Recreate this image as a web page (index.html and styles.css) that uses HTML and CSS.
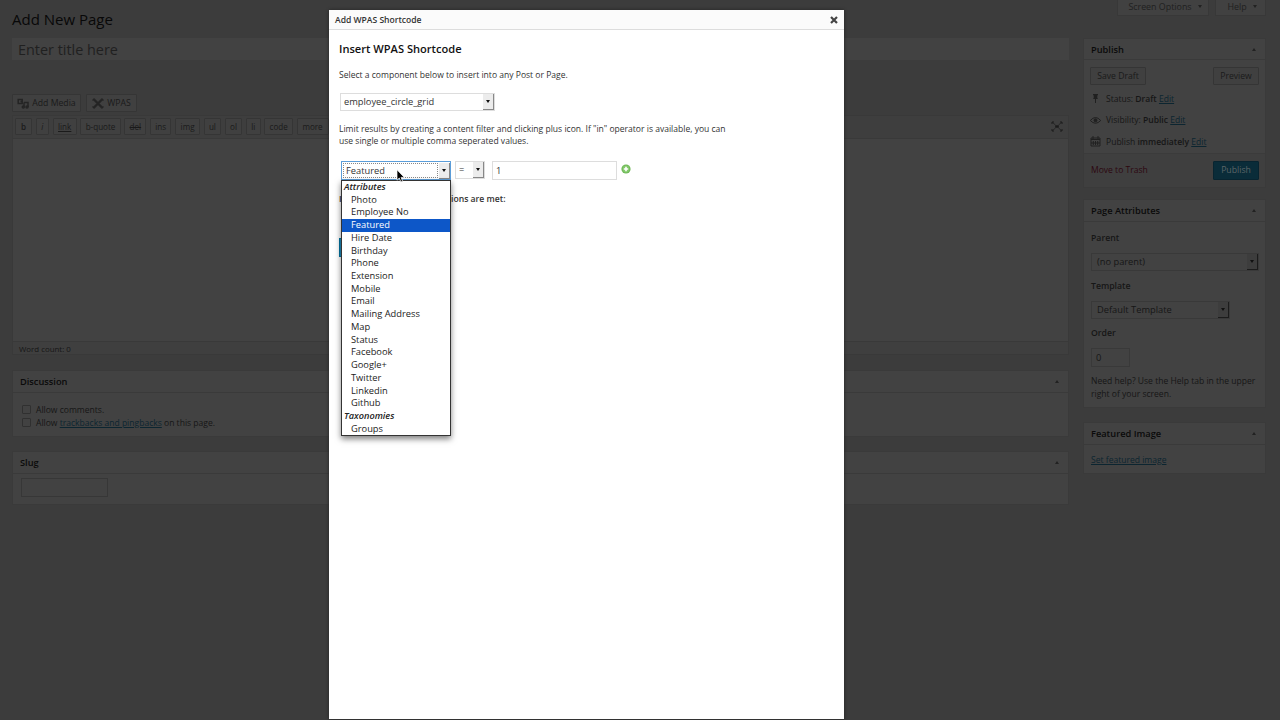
FILE: index.html
```html
<!DOCTYPE html>
<html lang="en">
<head>
  <meta charset="UTF-8" />
  <title>Add New Page</title>
  <link rel="stylesheet" href="styles.css">
</head>
<body>
  <div class="page">
    <header class="top">
      <h1>Add New Page</h1>
      <div class="tabs">
        <a class="tab tab-options">Screen Options <i class="down"></i></a>
        <a class="tab tab-help">Help <i class="down"></i></a>
      </div>
    </header>

    <div class="columns">
      <main class="main">
        <div class="title-input">Enter title here</div>

        <div class="media-buttons">
          <button class="btn btn-media">
            <svg width="12" height="11" viewBox="0 0 12 11" fill="none" stroke="#242424" stroke-width="1.5">
              <path d="M1.2 1.5h4v4h-4zM3.5 3.5h2" />
              <path d="M7 4.5h4v4.5M7 4.5v4" />
              <circle cx="6.3" cy="9" r="1" /><circle cx="10" cy="9" r="1" />
            </svg>
            Add Media
          </button>
          <button class="btn btn-wpas">
            <svg width="12" height="11" viewBox="0 0 12 11" fill="none" stroke="#242424">
              <path d="M2 1.5l8 8M10 1.5l-8 8" stroke-width="2.4" />
              <path d="M.5 2.5l2-2M9.5.5l2 2M.5 8.5l2 2M9.5 10.5l2-2" stroke-width="1.2" />
            </svg>
            WPAS
          </button>
        </div>

        <div class="editor">
          <div class="toolbar">
            <button class="btn q-b"><b>b</b></button>
            <button class="btn q-i"><em>i</em></button>
            <button class="btn q-link"><u>link</u></button>
            <button class="btn q-quote">b-quote</button>
            <button class="btn q-del"><del>del</del></button>
            <button class="btn q-ins">ins</button>
            <button class="btn q-img">img</button>
            <button class="btn q-ul">ul</button>
            <button class="btn q-ol">ol</button>
            <button class="btn q-li">li</button>
            <button class="btn q-code">code</button>
            <button class="btn q-more">more</button>
            <svg class="fullscreen" width="12" height="11" viewBox="0 0 12 11" stroke="#1b1b1b" fill="none">
              <path d="M1 3V1h2M9 1h2v2M1 8v2h2M9 10h2V8" />
              <path d="M1.5 1.5l3 2.5M10.5 1.5l-3 2.5M1.5 9.5l3-2.5M10.5 9.5l-3-2.5" stroke-width=".7" />
              <path d="M4.2 5.5h3.6" stroke-width="2.4" />
            </svg>
          </div>
          <div class="textarea"></div>
          <div class="word-count">Word count: 0</div>
        </div>

        <section class="box discussion">
          <h3>Discussion <i class="up"></i></h3>
          <label><span class="check"></span>Allow comments.</label>
          <label><span class="check"></span>Allow&nbsp;<a>trackbacks and pingbacks</a>&nbsp;on this page.</label>
        </section>

        <section class="box slug">
          <h3>Slug <i class="up"></i></h3>
          <div class="slug-input"></div>
        </section>
      </main>

      <aside class="side">
        <section class="box publish">
          <h3>Publish <i class="up"></i></h3>
          <div class="save-row">
            <button class="btn btn-save">Save Draft</button>
            <button class="btn btn-preview">Preview</button>
          </div>
          <div class="info">
            <svg width="11" height="11" viewBox="0 0 11 11" fill="#202020"><path d="M3 1h5v1l-.7.5V5L8 6H6v4H5V6H3l.7-1V2.5L3 2z" /></svg>
            <p>Status: <b>Draft</b> <a>Edit</a></p>
          </div>
          <div class="info">
            <svg width="11" height="11" viewBox="0 0 11 11" fill="none" stroke="#202020"><path d="M.3 5.5Q5.5-.5 10.7 5.5Q5.5 11 .3 5.5z" /><circle cx="5.5" cy="5.3" r="1.5" fill="#202020" /></svg>
            <p>Visibility: <b>Public</b> <a>Edit</a></p>
          </div>
          <div class="info">
            <svg width="11" height="11" viewBox="0 0 11 11" fill="none" stroke="#202020"><path d="M1 2h9v8H1zM1 3.5h9M3 0v3M8 0v3M3.3 5v4M5.5 5v4M7.7 5v4M1 7h9" /></svg>
            <p>Publish <b>immediately</b> <a>Edit</a></p>
          </div>
          <div class="publish-footer">
            <span class="trash">Move to Trash</span>
            <button class="btn-publish">Publish</button>
          </div>
        </section>

        <section class="box attributes">
          <h3>Page Attributes <i class="up"></i></h3>
          <h4>Parent</h4>
          <div class="dark-select parent">(no parent)<span class="arrow"></span></div>
          <h4>Template</h4>
          <div class="dark-select template">Default Template<span class="arrow"></span></div>
          <h4>Order</h4>
          <div class="order">0</div>
          <p class="help">Need help? Use the Help tab in the upper<br>right of your screen.</p>
        </section>

        <section class="box featured">
          <h3>Featured Image <i class="up"></i></h3>
          <p><a>Set featured image</a></p>
        </section>
      </aside>
    </div>
  </div>

  <!-- Shortcode dialog -->
  <div class="modal">
    <div class="modal-title">
      <span>Add WPAS Shortcode</span>
      <svg width="8" height="8" viewBox="0 0 8 8" stroke="#444" stroke-width="2.2"><path d="M1 1l6 6M7 1L1 7" /></svg>
    </div>
    <div class="modal-body">
      <h2>Insert WPAS Shortcode</h2>
      <p class="intro">Select a component below to insert into any Post or Page.</p>
      <div class="select component">employee_circle_grid<span class="arrow"></span></div>
      <p class="limit">Limit results by creating a content filter and clicking plus icon. If "in" operator is available, you can<br>use single or multiple comma seperated values.</p>
      <div class="filter">
        <div class="select field"><span class="focus">Featured</span><span class="arrow"></span>
          <ul class="options">
            <li class="group">Attributes</li>
            <li>Photo</li>
            <li>Employee No</li>
            <li class="selected">Featured</li>
            <li>Hire Date</li>
            <li>Birthday</li>
            <li>Phone</li>
            <li>Extension</li>
            <li>Mobile</li>
            <li>Email</li>
            <li>Mailing Address</li>
            <li>Map</li>
            <li>Status</li>
            <li>Facebook</li>
            <li>Google+</li>
            <li>Twitter</li>
            <li>Linkedin</li>
            <li>Github</li>
            <li class="group">Taxonomies</li>
            <li>Groups</li>
          </ul>
          <svg class="cursor" width="9" height="14" viewBox="0 0 9 14" fill="#000" stroke="#fff" stroke-width=".7"><path d="M1 .8v10.4l2.3-2.2 1.6 3.9 1.7-.7L5 8.4h3.3z" /></svg>
        </div>
        <div class="select operator">=<span class="arrow"></span></div>
        <div class="value">1</div>
        <svg class="plus" width="10" height="10" viewBox="0 0 10 10"><circle cx="5" cy="5" r="4.6" fill="#6fb857" /><circle cx="5" cy="5" r="3.4" fill="#83c96b" /><path d="M5 2.8v4.4M2.8 5h4.4" stroke="#fff" stroke-width="1.6" /></svg>
      </div>
      <p class="conditions"><span>I</span><span>ions are met:</span></p>
      <button class="insert"></button>
    </div>
  </div>
</body>
</html>
```
FILE: styles.css
```css
* {
  box-sizing: border-box;
}

body {
  height: 720px;
  margin: 0;
  overflow: hidden;
  position: relative;
  background-color: #3c3c3c;
  color: #161616;
  font-family: "Open Sans", sans-serif;
  font-size: 8.55px;
}

h1, h2, h3, h4, p, ul {
  margin: 0;
  padding: 0;
}

button {
  font-family: inherit;
  font-size: inherit;
  color: inherit;
  padding: 0;
}

svg {
  flex: none;
}

b {
  font-weight: 600;
}

a {
  color: #0c2530;
  text-decoration: underline;
}

.page {
  padding: 0 14px 0 12px;
}

.top {
  display: flex;
  justify-content: space-between;
  height: 38px;
}

h1 {
  padding-top: 8px;
  font-size: 15px;
  line-height: 22px;
  font-weight: 400;
  color: #080808;
}

.tabs {
  display: flex;
  gap: 6px;
}

.tab {
  display: flex;
  align-items: center;
  justify-content: center;
  gap: 6px;
  height: 16px;
  padding-bottom: 2px;
  background-color: #414141;
  border: 1px solid #383838;
  border-top: none;
  color: #202020;
  font-size: 8.9px;
  text-decoration: none;
}

.tab-options {
  width: 92px;
  padding-left: 4px;
}

.tab-help {
  width: 51px;
  padding-left: 3px;
}

.down, .up {
  border-left: 2px solid transparent;
  border-right: 2px solid transparent;
}

.down {
  border-top: 3px solid #222;
}

.up {
  border-bottom: 3px solid #222;
}

.columns {
  display: flex;
  gap: 14px;
}

.main {
  width: 1057px;
}

.side {
  width: 183px;
}

.title-input {
  height: 22px;
  padding-left: 6px;
  background-color: #424242;
  color: #202020;
  font-size: 14.4px;
  line-height: 23px;
}

.btn {
  background-color: #404040;
  border: 1px solid #353535;
  border-radius: 1px;
  color: #1a1a1a;
}

.media-buttons {
  display: flex;
  gap: 5px;
  padding-top: 34px;
}

.media-buttons .btn {
  display: flex;
  align-items: center;
  justify-content: center;
  gap: 3px;
  height: 18px;
  font-size: 8.7px;
}

.btn-media {
  width: 69px;
}

.btn-wpas {
  width: 51px;
}

.editor {
  height: 240px;
  margin-top: 3px;
  border: 1px solid #393939;
}

.toolbar {
  display: flex;
  align-items: flex-start;
  gap: 3.6px;
  height: 23px;
  padding: 2px 5px 0 2px;
  background-color: #3e3e3e;
  border-bottom: 1px solid #393939;
}

.toolbar .btn {
  height: 17px;
  font-size: 8.1px;
}

.q-b { width: 17px; }
.q-i { width: 13.5px; }
.q-link { width: 24px; }
.q-quote { width: 40.5px; }
.q-del { width: 22px; }
.q-ins { width: 21.5px; }
.q-img { width: 25px; }
.q-ul { width: 17.5px; }
.q-ol { width: 17.5px; }
.q-li { width: 15px; }
.q-code { width: 28.5px; }
.q-more { width: 32px; }

.fullscreen {
  margin: 3px 0 0 auto;
}

.textarea {
  height: 202px;
  background-color: #424242;
}

.word-count {
  height: 13px;
  padding-left: 6px;
  background-color: #3f3f3f;
  border-top: 1px solid #393939;
  font-size: 7.9px;
  line-height: 14px;
}

.box {
  background-color: #424242;
  border: 1px solid #3a3a3a;
}

.box h3 {
  display: flex;
  align-items: center;
  justify-content: space-between;
  height: 22px;
  padding: 0 9px 0 7px;
  border-bottom: 1px solid #3a3a3a;
  font-size: 9.25px;
  font-weight: 600;
  color: #0a0a0a;
}

.discussion {
  height: 67px;
  margin-top: 15px;
}

.discussion label {
  display: flex;
  align-items: center;
  height: 13px;
  padding-left: 9px;
}

.discussion h3 {
  margin-bottom: 10px;
}

.check {
  width: 9px;
  height: 9px;
  margin-right: 5px;
  border: 1px solid #303030;
  border-radius: 1px;
}

.slug {
  height: 54px;
  margin-top: 14px;
}

.slug-input {
  width: 87px;
  height: 19px;
  margin: 4px 0 0 8px;
  border: 1px solid #373737;
}

.publish {
  height: 150px;
}

.publish h3 {
  height: 21px;
}

.save-row {
  display: flex;
  justify-content: space-between;
  padding: 7px 6px 3px 6px;
}

.save-row .btn {
  height: 18px;
  font-size: 8.65px;
}

.btn-save {
  width: 56px;
}

.btn-preview {
  width: 46px;
}

.info {
  display: flex;
  align-items: center;
  gap: 5px;
  height: 21.5px;
  padding-left: 6px;
}

.publish-footer {
  display: flex;
  align-items: center;
  justify-content: space-between;
  height: 34px;
  padding: 0 6px 0 7px;
  background-color: #3f3f3f;
  border-top: 1px solid #3b3b3b;
}

.trash {
  color: #2d0710;
}

.btn-publish {
  width: 46px;
  height: 19px;
  background-color: #0a2c39;
  border: 1px solid #082430;
  border-radius: 1px;
  color: #5c6568;
  font-size: 8.7px;
}

.attributes {
  height: 209px;
  margin-top: 11px;
}

h4 {
  padding-left: 7px;
  font-size: 8.7px;
  line-height: 12px;
  font-weight: 600;
}

.attributes h3 {
  margin-bottom: 10px;
}

.dark-select {
  display: flex;
  justify-content: space-between;
  height: 18px;
  margin: 9px 0 9px 7px;
  padding-left: 5px;
  border: 1px solid #393939;
  font-size: 9.3px;
  line-height: 16px;
}

.dark-select.template {
  margin-bottom: 8px;
}

.parent {
  width: 168px;
}

.template {
  width: 139px;
}

.arrow {
  display: flex;
  align-items: center;
  justify-content: center;
  width: 11px;
  background-color: #ececec;
  border-right: 1px solid #888;
  border-bottom: 1px solid #888;
}

.arrow::after {
  content: "";
  border-left: 2.5px solid transparent;
  border-right: 2.5px solid transparent;
  border-top: 3.5px solid #111;
}

.dark-select .arrow {
  background-color: #3d3d3d;
  border-color: #1c1c1c;
}

.order {
  width: 39px;
  height: 19px;
  margin: 9px 0 8px 7px;
  padding-left: 4px;
  border: 1px solid #393939;
  font-size: 9.4px;
  line-height: 17px;
}

.help {
  padding-left: 7px;
  line-height: 12.5px;
}

.featured {
  height: 52px;
  margin-top: 14px;
}

.featured p {
  padding: 9px 7px;
}

/* Dialog over the page */
.modal {
  position: absolute;
  top: 10px;
  left: 329px;
  width: 515px;
  height: 709px;
  background-color: #fff;
  box-shadow: 0 0 3px #222;
  color: #333;
}

.modal-title {
  display: flex;
  align-items: center;
  justify-content: space-between;
  height: 20px;
  padding: 0 6px;
  background-color: #fbfbfb;
  border-bottom: 1px solid #ddd;
  font-weight: 600;
}

.modal-body {
  padding: 10px 10px;
}

h2 {
  font-size: 11.1px;
  line-height: 17px;
  font-weight: 600;
  color: #111;
}

.intro {
  margin-top: 12px;
  line-height: 13px;
}

.select {
  display: flex;
  justify-content: space-between;
  height: 18px;
  border: 1px solid #ddd;
  padding-left: 4px;
  font-size: 9.3px;
  line-height: 16px;
}

.component {
  width: 155px;
  margin: 11px 0 0 1px;
  padding-left: 3px;
}

.limit {
  margin-top: 12px;
  line-height: 12px;
}

.filter {
  display: flex;
  margin: 14px 0 0 2px;
}

.field {
  position: relative;
  width: 110px;
  height: 19px;
  padding: 1px 0 0 1px;
  border-color: #5b9dd9;
}

.focus {
  width: 95px;
  height: 15px;
  padding-left: 2px;
  border: 1px dotted #888;
  line-height: 13px;
}

.operator {
  width: 30px;
  margin-left: 4px;
  padding-left: 3px;
}

.value {
  width: 125px;
  height: 19px;
  margin-left: 7px;
  padding-left: 3px;
  border: 1px solid #ddd;
  font-size: 9.3px;
  line-height: 18px;
}

.plus {
  margin: 3px 0 0 4px;
}

.options {
  position: absolute;
  top: 18px;
  left: -1px;
  width: 110px;
  border: 1px solid #333;
  background-color: #fff;
  box-shadow: 0 3px 6px rgba(0, 0, 0, 0.5);
  list-style: none;
  z-index: 1;
}

.options li {
  height: 12.72px;
  padding-left: 9px;
  font-size: 9.3px;
  line-height: 12.5px;
  color: #222;
}

.options .group {
  padding-left: 2px;
  font-size: 9.2px;
  font-weight: 600;
  font-style: italic;
}

.options .selected {
  background-color: #0d57c8;
  color: #fff;
}

.cursor {
  position: absolute;
  top: 7px;
  left: 54px;
  z-index: 2;
}

.conditions {
  display: flex;
  justify-content: space-between;
  width: 166.5px;
  margin-top: 13px;
  font-size: 8.65px;
  line-height: 12px;
  font-weight: 600;
}

.insert {
  display: block;
  width: 80px;
  height: 19px;
  margin-top: 33px;
  background-color: #1e8cbe;
  border: 1px solid #0074a2;
}
```
